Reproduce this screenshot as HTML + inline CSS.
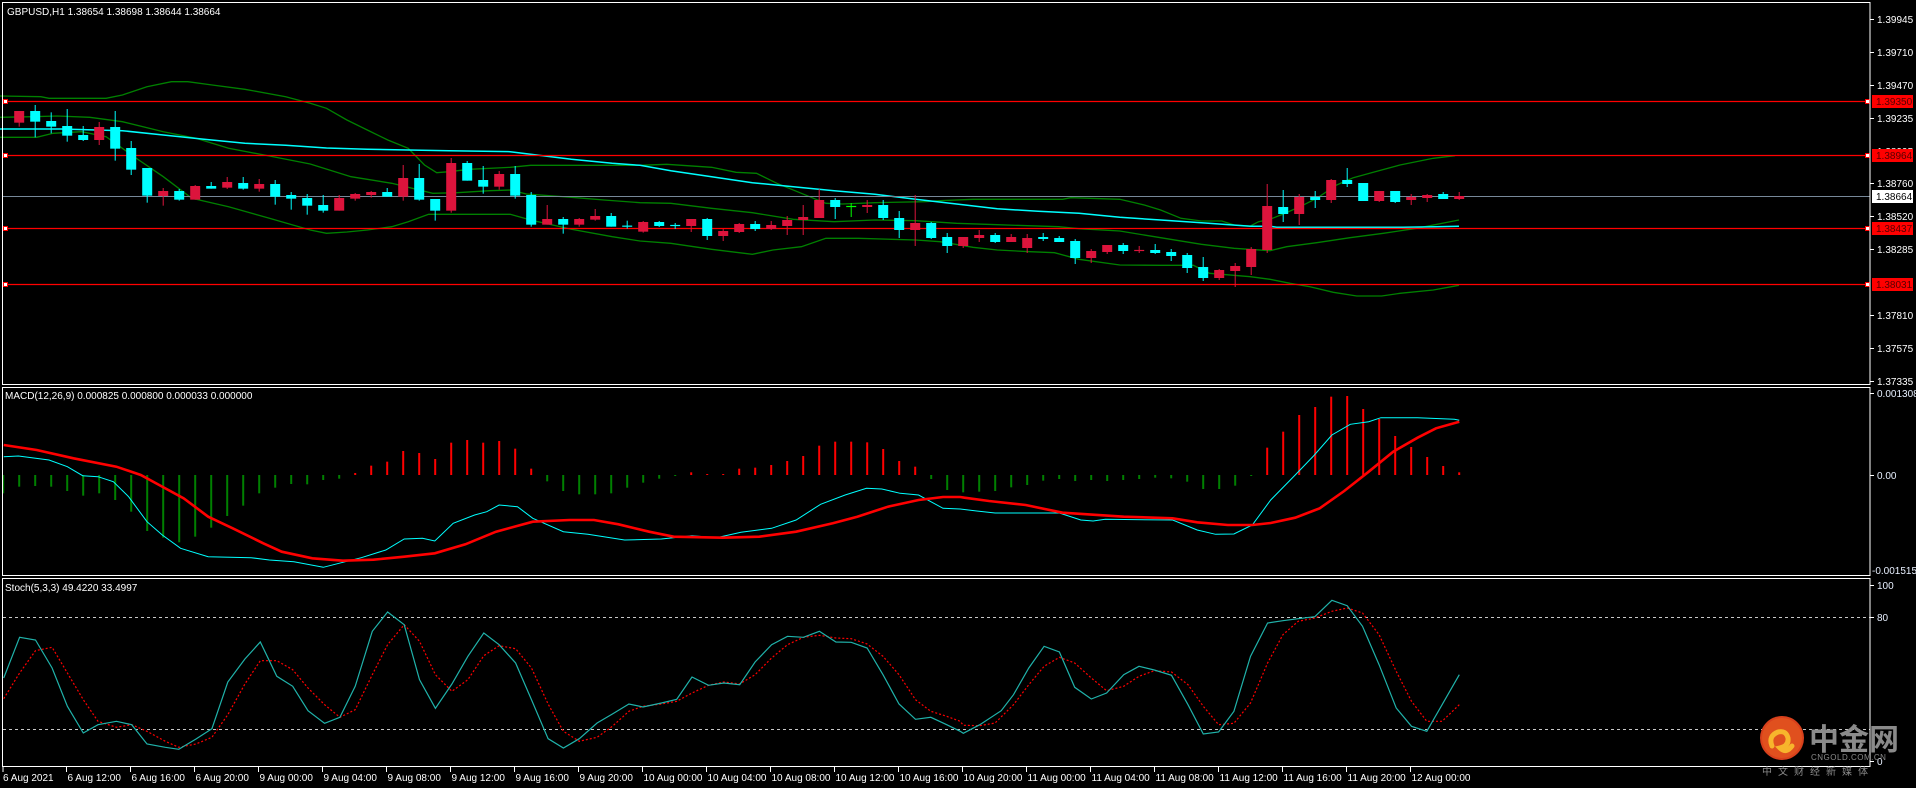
<!DOCTYPE html>
<html><head><meta charset="utf-8">
<style>
html,body{margin:0;padding:0;background:#000;width:1916px;height:788px;overflow:hidden}
svg{display:block}
text{font-family:"Liberation Sans",sans-serif;font-size:10px;fill:#fff}
</style></head>
<body>
<svg id="s" width="1916" height="788" viewBox="0 0 1916 788" xmlns="http://www.w3.org/2000/svg">
<rect width="1916" height="788" fill="#000"/>
<g id="g"></g>
<!-- frames -->
<g stroke="#fff" stroke-width="1" fill="none">
<rect x="2.5" y="2.5" width="1867.5" height="382"/>
<rect x="2.5" y="387.5" width="1867.5" height="188"/>
<rect x="2.5" y="578.5" width="1867.5" height="188"/>
</g>
<text x="7" y="15">GBPUSD,H1  1.38654 1.38698 1.38644 1.38664</text>
<text x="5" y="399">MACD(12,26,9) 0.000825 0.000800 0.000033 0.000000</text>
<text x="5" y="591">Stoch(5,3,3) 49.4220 33.4997</text>
<!-- logo -->
<g>
<circle cx="1782" cy="738" r="22" fill="#d8401c"/>
<circle cx="1782" cy="738" r="20" fill="#e0501e"/>
<path d="M1772 746 q-4 -10 6 -14 q8 -2 10 6 q1 8 -8 10 q6 6 12 -2" fill="none" stroke="#f7b52c" stroke-width="5" stroke-linecap="round"/>
<text x="1809" y="750" style="font-family:'Noto Sans CJK SC',sans-serif;font-size:30px;font-weight:bold;fill:#8a8a8a">中金网</text>
<text x="1811" y="760" style="font-size:8px;fill:#8a8a8a;letter-spacing:0.5px">CNGOLD.COM.CN</text>
<text x="1762" y="775" style="font-family:'Noto Sans CJK SC',sans-serif;font-size:10px;fill:#8a8a8a;letter-spacing:6px">中文财经新媒体</text>
</g>
</svg>
<script>
var NS="http://www.w3.org/2000/svg",G=document.getElementById('g');
function el(t,a,txt){var e=document.createElementNS(NS,t);for(var k in a)e.setAttribute(k,a[k]);if(txt!=null)e.textContent=txt;G.appendChild(e);return e;}
function pl(pts,ox,oy,sx,sy,attrs){var s=pts.map(function(p){return (ox+p[0]/sx).toFixed(1)+','+(oy+p[1]/sy).toFixed(1)}).join(' ');attrs.points=s;attrs.fill='none';el('polyline',attrs);}
var CX=function(i){return 19.2+16*i;};
// Bollinger & MA
var GR='#008000';
var up4=[[0,48],[100,50],[120,55],[260,55],[300,45],[360,20],[420,5],[460,5],[520,15],[600,28],[700,50],[760,70],[800,85],[850,120],[900,150],[950,180],[1000,205],[1040,255],[1070,278],[1100,275],[1150,268],[1250,262],[1300,256],[1568,256]];
var up5=[[0,72],[90,73],[200,82],[260,97],[310,100],[360,130],[440,170],[480,190],[520,192],[600,188],[720,185],[760,182],[840,178],[1060,178],[1080,173],[1200,178],[1260,195],[1300,210],[1350,235],[1400,243],[1450,243],[1480,255],[1520,258],[1540,245],[1568,238]];
var up6=[[0,244],[60,246],[100,255],[160,255],[200,238],[250,222],[300,200],[350,175],[410,135],[460,113],[520,97],[600,75],[700,55],[765,47]];
var md4=[[0,112],[80,110],[140,108],[220,112],[300,125],[400,155],[480,175],[560,205],[660,228],[760,252],[860,290],[960,310],[1060,340],[1120,338],[1200,332],[1250,330],[1290,342],[1400,352],[1480,360],[1568,368]];
var md5=[[0,184],[100,190],[200,205],[300,218],[400,238],[500,245],[600,240],[700,242],[800,250],[900,254],[1050,260],[1100,266],[1200,273],[1300,293],[1400,313],[1480,325],[1568,332]];
var md6=[[80,325],[130,330],[200,325],[260,320],[350,308],[450,293],[550,280],[650,265],[777,240]];
var lo4=[[0,172],[90,172],[130,160],[200,155],[260,170],[340,240],[400,290],[470,355],[560,380],[660,415],[760,450],[800,460],[850,456],[900,450],[960,440],[1000,425],[1050,403],[1250,403],[1300,420],[1400,448],[1500,470],[1568,483]];
var lo5=[[0,298],[100,310],[200,328],[300,343],[350,330],[420,320],[480,295],[560,295],[640,298],[700,300],[760,305],[840,322],[900,330],[980,335],[1040,338],[1100,358],[1200,375],[1300,376],[1380,376],[1420,400],[1520,410],[1568,418]];
var lo6=[[80,400],[150,402],[200,415],[270,430],[330,440],[400,457],[470,468],[545,468],[600,460],[700,450],[777,436]];
function band(a,b,c){var p=[];a.forEach(function(q){p.push([q[0]/2.45,80+q[1]/3]);});b.forEach(function(q){var x=630+q[0]/2.45;if(x>p[p.length-1][0])p.push([x,140+q[1]/3]);});c.forEach(function(q){var x=1200+q[0]/3;if(x>p[p.length-1][0])p.push([x,140+q[1]/3]);});pl(p,0,0,1,1,{stroke:GR,'stroke-width':1.3});}
band(up4,up5,up6);band(md4,md5,md6);band(lo4,lo5,lo6);
var ma4=[[0,147],[150,147],[300,152],[400,165],[500,178],[600,190],[700,196],[800,204],[900,208],[1000,210],[1100,212],[1250,215],[1300,223],[1400,238],[1500,250],[1568,256]];
var ma5=[[0,73],[100,92],[200,110],[300,128],[400,140],[500,152],[600,163],[700,178],[800,192],[900,206],[1000,214],[1100,220],[1200,232],[1300,240],[1400,248],[1520,259],[1568,259]];
var ma6=[[30,250],[90,255],[230,262],[515,262],[609,262],[705,260],[777,259]];
(function(){var p=[];ma4.forEach(function(q){p.push([q[0]/2.45,80+q[1]/3]);});ma5.forEach(function(q){var x=630+q[0]/2.45;if(x>p[p.length-1][0])p.push([x,140+q[1]/3]);});ma6.forEach(function(q){var x=1200+q[0]/3;if(x>p[p.length-1][0])p.push([x,140+q[1]/3]);});pl(p,0,0,1,1,{stroke:'#00FFFF','stroke-width':1.5});})();
// horizontal lines
[[101,'#ff0000'],[155,'#ff0000'],[228,'#ff0000'],[284,'#ff0000']].forEach(function(h){el('line',{x1:3,x2:1870,y1:h[0]+.5,y2:h[0]+.5,stroke:h[1],'stroke-width':1.2});el('rect',{x:3.5,y:h[0]-1.5,width:4,height:4,fill:'#fff',stroke:'#f00','stroke-width':1});el('rect',{x:1865.5,y:h[0]-1.5,width:4,height:4,fill:'#fff',stroke:'#f00','stroke-width':1});});
el('line',{x1:3,x2:1870,y1:196.5,y2:196.5,stroke:'#778899','stroke-width':1});
// candles
var A=[[93,128,93,140,'R'],[93,125,75,172,'C'],[123,140,97,160,'C'],[138,167,87,185,'C'],[165,180,138,183,'C'],[141,180,126,195,'R'],[141,206,93,242,'C'],[204,269,183,285,'C'],[264,347,264,368,'C'],[333,348,324,377,'R'],[333,359,327,362,'C'],[318,359,315,359,'R'],[318,326,306,326,'C'],[306,323,291,327,'R'],[309,326,291,329,'C'],[312,326,297,335,'R'],[312,350,300,374,'C'],[345,356,336,389,'C'],[354,377,342,404,'C'],[375,392,345,398,'C'],[354,392,345,392,'R'],[342,356,339,362,'R'],[336,345,333,353,'R'],[336,350,324,350,'C'],[294,350,255,362,'R'],[294,359,252,362,'C'],[357,392,357,422,'C'],[249,392,234,398,'R'],[249,302,243,302,'C'],[300,320,258,341,'C'],[282,320,273,329,'R'],[282,347,258,356,'C'],[345,434,336,440,'C'],[417,434,375,434,'R'],[417,434,411,461,'C'],[417,434,414,440,'R'],[408,419,387,422,'R'],[408,440,399,440,'C'],[437,440,422,446,'C']];
var B=[[246,275,243,278,'R'],[246,258,243,261,'C'],[255,258,249,267,'C'],[237,258,237,276,'R'],[237,288,234,300,'C'],[273,288,267,303,'R'],[252,276,249,279,'R'],[252,267,243,273,'C'],[255,267,243,270,'R'],[240,258,228,285,'R'],[231,240,195,285,'R'],[180,234,147,234,'R'],[180,201,174,237,'C'],[198,201,189,231,'G'],[195,201,180,219,'R'],[195,234,180,240,'C'],[234,270,213,294,'C'],[249,270,165,318,'R'],[249,294,246,297,'C'],[291,318,279,339,'C'],[291,318,291,324,'R'],[285,294,270,306,'R'],[285,306,279,309,'C'],[291,306,282,306,'R'],[294,324,282,339,'R'],[291,297,279,303,'C'],[294,306,288,306,'C'],[303,354,297,372,'C'],[333,354,327,369,'R'],[315,336,315,342,'R'],[315,333,309,342,'C'],[330,333,318,339,'R'],[330,339,312,342,'C'],[336,348,327,363,'C'],[345,384,339,399,'C'],[381,414,351,423,'C'],[390,414,387,420,'R'],[378,393,369,441,'R'],[327,381,321,405,'R'],[198,330,132,339,'R'],
[201,222,150,246,'C'],[171,222,162,255,'R'],[171,180,153,204,'C'],[120,180,117,189,'R'],[120,132,84,141,'C'],[129,183,129,183,'C'],[153,183,153,186,'R'],[153,186,153,189,'C'],[171,180,162,195,'R'],[165,174,162,186,'R'],[162,177,156,177,'C'],[168,177,156,180,'R']];
var COL={R:'#DC143C',C:'#00FFFF',G:'#00FF00'};
function candle(i,d,oy){var x=CX(i),c=COL[d[4]];var bt=oy+d[0]/3,bb=oy+d[1]/3,wt=oy+d[2]/3,wb=oy+d[3]/3;
el('line',{x1:x,x2:x,y1:wt,y2:wb,stroke:c,'stroke-width':1});
var h=bb-bt;if(h<1.2){el('line',{x1:x-5,x2:x+5,y1:bt+.5,y2:bt+.5,stroke:c,'stroke-width':1.2});}else el('rect',{x:x-5,y:bt,width:10,height:h,fill:c});}
A.forEach(function(d,i){candle(i,d,80);});
B.forEach(function(d,i){candle(39+i,d,140);});
// price axis
var pl_=[[19,'1.39945'],[52,'1.39710'],[85,'1.39470'],[118,'1.39235'],[183,'1.38760'],[216,'1.38520'],[249,'1.38285'],[315,'1.37810'],[348,'1.37575'],[381,'1.37335']];
pl_.forEach(function(p){el('line',{x1:1870,x2:1874,y1:p[0]+.5,y2:p[0]+.5,stroke:'#fff'});el('text',{x:1877,y:p[0]+4},p[1]);});
el('text',{x:1877,y:155},'1.38995');
[[101,'1.39350'],[155,'1.38964'],[228,'1.38437'],[284,'1.38031']].forEach(function(p){el('rect',{x:1872,y:p[0]-6,width:41,height:13,fill:'#ff0000'});el('text',{x:1876,y:p[0]+4,style:'fill:#550000'},p[1]);});
el('rect',{x:1872,y:190,width:41,height:13,fill:'#fff'});el('text',{x:1876,y:200,style:'fill:#000'},'1.38664');
// MACD
var h7=[325,305,303,305,318,332,325,345,380,438,458,472,455,428,393,362,325,308,297,298,285,281,264,242,230,198,204,222,173,165,173,168,191,251,289,318,328,328,325,308,293,281,272,262,267,267,251,248,240,228,213,182,170,170,172,192,228,245,282,315,322,320,318,307,300,287,282,288,285,288,285,282,278,280,290,312,312,302,272,188,140,90,66,35,33,72,102,153,186,216,243,262];
var redK={22:1,23:1,24:1,25:1,26:1,27:1,28:1,29:1,30:1,31:1,32:1,33:1};
h7.forEach(function(v,k){var x=3.2+16*k;var y=385+v/3;var pos=v<270;var c=pos?'#ff0000':'#008000';if(v===272||v===281||v===282&&k==58){} el('rect',{x:x-1,y:Math.min(y,475),width:2,height:Math.max(1,Math.abs(y-475)),fill:c});});
var mc7=[[6,215],[30,213],[80,225],[110,245],[135,272],[160,275],[185,290],[210,335],[240,410],[265,450],[295,490],[340,515],[410,518],[440,525],[480,530],[528,547],[560,532],[590,518],[630,495],[660,462],[690,460],[710,468],[740,415],[775,390],[795,380],[815,360],[845,365],[870,400],[920,440],[960,448],[1020,465],[1080,462],[1130,452],[1170,458],[1210,442],[1260,430],[1300,405],[1340,358],[1380,330],[1415,310],[1440,312],[1470,325],[1500,330],[1540,370],[1568,372]];
var mc8=[[20,372],[60,378],[90,384],[195,384],[230,405],[250,408],[270,403],[380,405],[420,435],[450,448],[480,447],[510,420],[540,345],[580,270],[610,213],[640,150],[670,118],[700,110],[720,98],[780,98],[840,103],[848,106]];
var ms7=[[6,180],[60,195],[120,220],[190,245],[230,270],[260,300],[300,340],[340,395],[380,430],[430,475],[460,500],[510,520],[560,527],[610,524],[660,515],[710,505],[760,478],[810,440],[870,410],[930,405],[970,405],[1010,418],[1060,440],[1100,455],[1180,458],[1240,455],[1300,440],[1360,415],[1400,395],[1450,365],[1500,345],[1540,336],[1568,336]];
var ms8=[[40,338],[80,348],[140,360],[200,383],[300,395],[380,400],[420,412],[470,420],[510,420],[540,414],[580,398],[620,370],[660,318],[700,260],[740,200],[780,158],[810,130],[848,110]];
function join(a,b,oy){var p=[];a.forEach(function(q){p.push([q[0]/1.633,oy+q[1]/3]);});b.forEach(function(q){var x=940+q[0]/1.633;if(x>p[p.length-1][0])p.push([x,oy+q[1]/3]);});return p;}
pl(join(mc7,mc8,385),0,0,1,1,{stroke:'#00FFFF','stroke-width':1});
pl(join(ms7,ms8,385),0,0,1,1,{stroke:'#ff0000','stroke-width':2.6});
el('line',{x1:1870,x2:1874,y1:393.5,y2:393.5,stroke:'#fff'});el('text',{x:1877,y:397,style:'fill:#e8f0ff'},'0.001308');
el('line',{x1:1870,x2:1874,y1:475.5,y2:475.5,stroke:'#fff'});el('text',{x:1877,y:479,style:'fill:#e8f0ff'},'0.00');
el('text',{x:1872,y:574,style:'fill:#e8f0ff'},'-0.001515');
// Stoch
el('line',{x1:3,x2:1870,y1:617.5,y2:617.5,stroke:'#c8c8c8','stroke-dasharray':'3,3'});
el('line',{x1:3,x2:1870,y1:729.5,y2:729.5,stroke:'#c8c8c8','stroke-dasharray':'3,3'});
var st9=[[6,300],[32,178],[58,186],[85,270],[110,385],[136,465],[160,440],[190,430],[215,440],[240,498],[270,508],[292,514],[320,483],[346,452],[372,312],[400,243],[425,192],[452,295],[478,325],[503,398],[530,436],[555,418],[580,325],[608,160],[633,102],[660,140],[685,305],[711,391],[738,318],[764,235],[790,165],[815,200],[842,255],[868,365],[895,482],[920,510],[946,482],[975,435],[1000,408],[1027,378],[1050,387],[1080,375],[1105,364],[1130,297],[1157,322],[1182,315],[1208,320],[1233,252],[1260,200],[1286,175],[1312,178],[1338,160],[1365,192],[1390,193],[1416,210],[1442,290],[1468,378],[1495,424],[1520,418],[1546,440],[1568,460]];
var st10=[[38,466],[65,440],[100,398],[120,350],[145,270],[170,205],[195,222],[220,328],[247,363],[272,345],[300,290],[325,265],[350,276],[378,292],[405,380],[430,468],[455,462],[480,400],[507,235],[535,135],[560,128],[585,122],[612,116],[640,67],[665,83],[690,145],[717,260],[745,390],[770,445],[795,460],[820,380],[848,290]];
var ss9=[[6,362],[32,285],[58,218],[85,208],[110,285],[136,365],[160,430],[190,448],[215,440],[240,460],[270,490],[292,508],[320,498],[346,478],[372,410],[400,318],[425,248],[452,248],[478,275],[503,330],[530,380],[555,418],[580,395],[608,290],[633,200],[660,140],[685,190],[711,290],[738,340],[764,305],[790,233],[815,203],[842,212],[868,270],[895,378],[920,460],[946,490],[975,478],[1000,445],[1027,400],[1050,385],[1080,378],[1105,370],[1130,345],[1157,322],[1182,312],[1208,318],[1233,290],[1260,240],[1286,200],[1312,178],[1338,172],[1365,180],[1390,182],[1416,198],[1442,235],[1468,290],[1495,365],[1520,400],[1546,415],[1568,430]];
var ss10=[[38,442],[65,443],[90,435],[120,380],[145,320],[170,265],[195,238],[220,255],[247,300],[272,338],[300,325],[325,295],[350,278],[378,282],[405,320],[430,385],[455,440],[480,436],[507,375],[535,255],[560,170],[585,130],[612,120],[640,100],[665,90],[690,105],[717,170],[745,280],[770,370],[795,430],[820,430],[848,380]];
pl(join(ss9,ss10,578),0,0,1,1,{stroke:'#ff0000','stroke-width':1.2,'stroke-dasharray':'2,2'});
pl(join(st9,st10,578),0,0,1,1,{stroke:'#20B2AA','stroke-width':1.2});
[[585,'100'],[617,'80'],[761,'0']].forEach(function(p){el('line',{x1:1870,x2:1874,y1:p[0]+.5,y2:p[0]+.5,stroke:'#fff'});el('text',{x:1877,y:p[0]+4,style:'fill:#e8f0ff'},p[1]);});
// time axis
var labs=['6 Aug 12:00','6 Aug 16:00','6 Aug 20:00','9 Aug 00:00','9 Aug 04:00','9 Aug 08:00','9 Aug 12:00','9 Aug 16:00','9 Aug 20:00','10 Aug 00:00','10 Aug 04:00','10 Aug 08:00','10 Aug 12:00','10 Aug 16:00','10 Aug 20:00','11 Aug 00:00','11 Aug 04:00','11 Aug 08:00','11 Aug 12:00','11 Aug 16:00','11 Aug 20:00','12 Aug 00:00'];
el('line',{x1:3,x2:3,y1:767,y2:772,stroke:'#fff'});el('text',{x:3,y:781},'6 Aug 2021');
labs.forEach(function(t,k){var x=Math.round(CX(3+4*k))-0.5;el('line',{x1:x,x2:x,y1:767,y2:772,stroke:'#fff'});el('text',{x:x+1,y:781},t);});
</script>
</body></html>
